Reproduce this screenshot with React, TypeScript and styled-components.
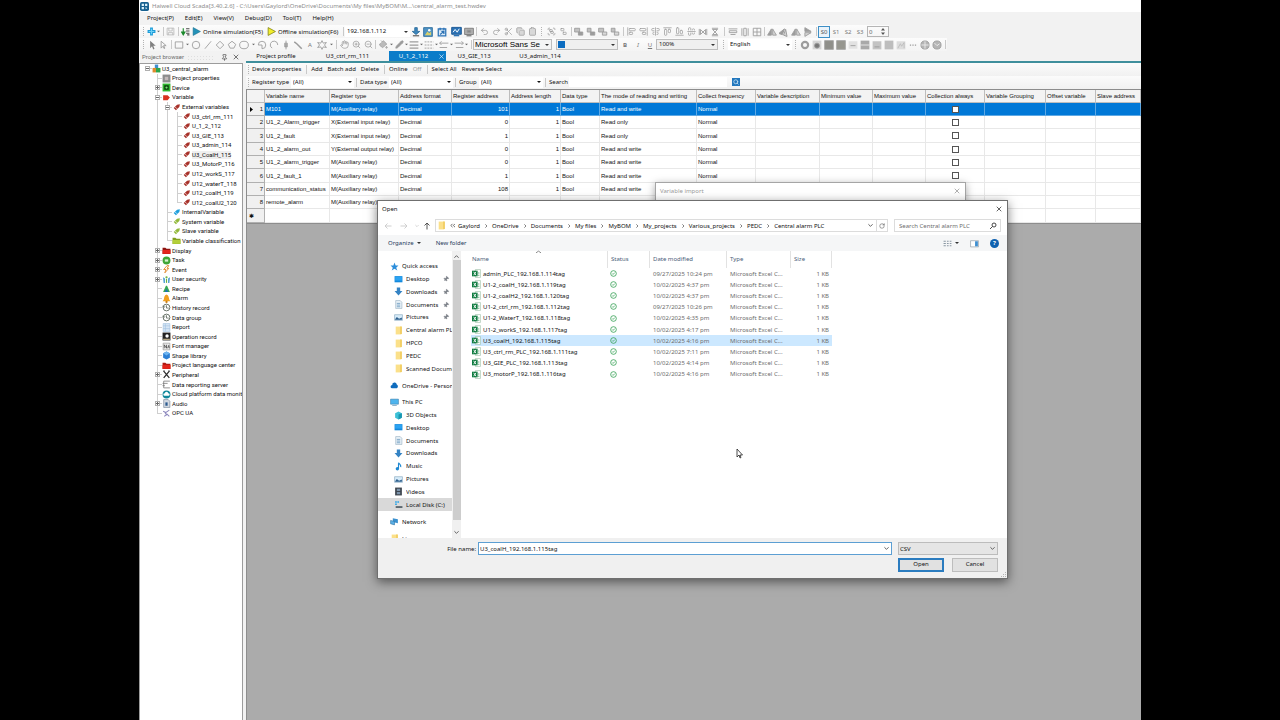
import React from 'react';
import styled, { createGlobalStyle, css } from 'styled-components';
import {
  Undo2, Redo2, Scissors, Copy, Clipboard, Group, Ungroup, Hand, ZoomIn, ZoomOut, Pin, Search, X,
  AlignStartVertical, AlignCenterVertical, AlignEndVertical, AlignStartHorizontal, AlignCenterHorizontal,
  AlignEndHorizontal, RotateCw, PaintBucket, Pencil,
} from 'lucide-react';

const ui = '"Noto Sans", "Open Sans", sans-serif';
const classic = '"Liberation Sans", Arial, sans-serif';
const tree = 'Roboto, "Noto Sans", sans-serif';

const Global = createGlobalStyle`
  * { box-sizing: border-box; }
  body { margin: 0; background: #000; font: 6px/8px ${ui}; color: #111; }
  button, input, select { font: inherit; color: inherit; margin: 0; padding: 0; border: 0; background: none; border-radius: 0; outline: 0; }
  svg { display: block; flex: none; }
  ul { list-style: none; margin: 0; padding: 0; }
`;

/* ---------- frame ---------- */
const Page = styled.div`padding: 0 139px; background: #000;`;
const Shell = styled.div`
  position: relative; min-height: 100vh; display: flex; flex-direction: column;
  background: #f2f2f2; overflow: hidden;
`;
const TitleBar = styled.header`
  height: 12px; display: flex; align-items: center; gap: 3px; padding-left: 1px;
  background: #fff; color: #8e8e8e; white-space: nowrap;
`;
const MenuBar = styled.nav`height: 13px; display: flex; align-items: center; gap: 11px; padding: 0 0 1px 8px;`;
const MenuItem = styled.button`line-height: 8px;`;

/* ---------- toolbars ---------- */
const Strip = styled.div`
  align-self: flex-start; height: 13px; display: flex; align-items: center;
  background: linear-gradient(#fcfcfc, #f4f4f4); white-space: nowrap;
`;
const Cell = styled.button<{ $w: number; $on?: boolean }>`
  width: ${p => p.$w}px; height: 12px; flex: none; display: flex; align-items: center; justify-content: center;
  gap: 2px; color: #777; ${p => p.$on && css`border: 1px solid #3d8fc6; background: #eaf3fa; color: #555;`}
`;
const RunCell = styled(Cell)`justify-content: flex-start; padding-left: 2px; color: #111;`;
const Gap = styled.span<{ $w: number }>`
  width: ${p => p.$w}px; height: 9px; flex: none; display: flex; justify-content: center;
  &::before { content: ''; width: 1px; background: #c9c9c9; }
`;
const Grip = styled.span<{ $w: number }>`
  width: ${p => p.$w}px; height: 9px; flex: none; display: flex; justify-content: center;
  &::before { content: ''; width: 1px; background: repeating-linear-gradient(#b4b4b4 0 1px, transparent 1px 2px); }
`;
const ComboBox = styled.span<{ $w: number; $boxed?: boolean; $fill?: string; $size?: number }>`
  position: relative; flex: none; width: ${p => p.$w}px; height: 11px; display: flex; align-items: center;
  background: ${p => p.$fill || 'transparent'};
  border: ${p => (p.$boxed ? '1px solid #bdbdbd' : '0')};
  select { appearance: none; width: 100%; height: 100%; padding: 0 0 0 2px; font-size: ${p => p.$size || 6}px; line-height: 9px; }
  > svg { position: absolute; right: 2px; top: 50%; margin-top: -2px; pointer-events: none; }
`;
const FontCombo = styled(ComboBox)`font-family: ${classic}; color: #000; margin-right: 4px; select { padding-left: 1px; }`;
const Swatch = styled.i`width: 7px; height: 7px; flex: none; background: #0b6cc0; margin-left: 1px;`;
const Spin = styled.span`
  width: 22px; height: 11px; margin-left: 1px; display: flex; align-items: center; justify-content: space-between; border: 1px solid #b5b5b5; color: #666; padding: 0 3px 0 1px;
  input { width: 10px; height: 9px; appearance: textfield; }
  input::-webkit-inner-spin-button { appearance: none; }
`;

const Caret = ({ c = '#333', s = 4 }: { c?: string; s?: number }) => (
  <svg width={s} height={s} viewBox="0 0 4 4"><path d="M0 1h4L2 3z" fill={c} /></svg>
);
const Combo = ({ label, w, value, boxed, fill, size, children, c }: any) => (
  <ComboBox $w={w} $boxed={boxed} $fill={fill} $size={size}>
    {children}
    <select aria-label={label}><option>{value}</option></select>
    <Caret c={c} />
  </ComboBox>
);

const G = ({ children, s = 10 }: { children: React.ReactNode; s?: number }) => (
  <svg width={s} height={s} viewBox="0 0 16 16" fill="none" stroke="#9c9c9c" strokeWidth="1.4">{children}</svg>
);
const L = (Icon: any, fill = 'none') => <Icon size={9} strokeWidth={2} color="#9c9c9c" fill={fill} />;
const FlipIcon = ({ r }: { r: number }) => (
  <G><g transform={`rotate(${r} 8 8)`}><path d="M7 3v10H1z" fill="#9c9c9c" /><path d="M9 3v10h6z" fill="#d4d4d4" /></g></G>
);

type Tool = [string, number, React.ReactNode?];
const renderTools = (tools: Tool[]) => tools.map(([name, w, icon], i) => {
  if (name === '|') return <Gap key={i} $w={w} />;
  if (name === ':') return <Grip key={i} $w={w} />;
  if (name === 'v') return <Cell key={i} $w={w} aria-label="More"><Caret s={3} c="#666" /></Cell>;
  return <Cell key={i} $w={w} aria-label={name}>{icon}</Cell>;
});

const fileTools: Tool[] = [
  [':', 8],
  ['New', 9, <G s={9}><path d="M8 1v14M1 8h14" stroke="#1b9bd8" strokeWidth="5" /><path d="M8 3v10M3 8h10" stroke="#6fd0f5" strokeWidth="2" /></G>],
  ['v', 5], ['|', 4],
  ['Save', 10, <G s={9}><path d="M2 2h12v12H2zM5 2v5h6V2M4 14v-4h8v4" stroke="#b5b5b5" /></G>],
  ['|', 6],
  ['Compile', 9, <G s={9}><path d="M4 2v11M1 9l3 5 3-5z" stroke="#1d8a2e" fill="#1d8a2e" strokeWidth="2" /><path d="M9 3h6M9 7h6M9 11h6M11 14h4" stroke="#4a4a4a" strokeWidth="2" /></G>],
];
const deployTools: Tool[] = [
  ['Download', 12, <G><path d="M6 1h4v6h4l-6 5-6-5h4z" fill="#3d87bd" stroke="#2a6b9c" /><path d="M3 14h10" stroke="#666" strokeWidth="2" /></G>],
  ['Picture', 12, <G><path d="M1 1h14v14H1z" fill="#4f93c4" stroke="#2f6f9f" /><path d="M3 13l4-6 3 3 3-3v6z" fill="#d8cf6a" stroke="none" /><circle cx="10" cy="5" r="2" fill="#fff" stroke="none" /></G>],
  ['Backup', 15, <G><path d="M2 3h12v11H2z" stroke="#2b72b5" fill="#dbeaf7" strokeWidth="2" /><path d="M5 1v4M11 1v4M5 12l6-5M7 7h4v4" stroke="#2b72b5" strokeWidth="2" /></G>],
  ['Monitor', 14, <G s={11}><path d="M1 2h14v10H1z" fill="#2b72b5" stroke="#1c5a96" /><path d="M3 9l3-4 3 4 3-5" stroke="#fff" /><path d="M4 14h8" stroke="#2b72b5" strokeWidth="2" /></G>],
  ['Screen', 11, <G><path d="M1 2h14v10H1z" fill="#b0b0b0" stroke="#777" /><path d="M5 5h6v4H5z" fill="#888" /><path d="M4 14h8" stroke="#777" strokeWidth="2" /></G>],
  ['|', 4],
  ['Undo', 12, L(Undo2)], ['Redo', 12, L(Redo2)], ['Cut', 12, L(Scissors)], ['Copy', 12, L(Copy, '#d8d8d8')], ['Paste', 12, L(Clipboard, '#d8d8d8')],
  [':', 7], ['Group', 12, L(Group)], ['Ungroup', 12, L(Ungroup)], ['|', 4],
  ...['Front', 'Back', 'Forward', 'Backward'].map((n, i): Tool => [n, 12,
    <G><path d={i % 2 ? 'M2 2h6v6H2z' : 'M1 2h8v6H1z'} fill="#c2c2c2" /><path d="M7 8h7v5H7z" fill={i < 2 ? '#9c9c9c' : '#d9d9d9'} /></G>]),
  ['|', 4],
  ['Align left', 12, L(AlignStartVertical)], ['Align right', 12, L(AlignEndVertical)], ['Align centre', 12, L(AlignCenterVertical)],
  ['Align top', 12, L(AlignStartHorizontal)], ['Align bottom', 12, L(AlignEndHorizontal)], ['Align middle', 12, L(AlignCenterHorizontal)],
  ['Space across', 12, <G><path d="M2 3v10M14 3v10M4 4l4 4 4-4v8l-4-4-4 4z" /></G>],
  ['Space down', 12, <G><path d="M3 2h10M3 14h10M4 4l4 4-4 4h8l-4-4 4-4z" /></G>],
  ['|', 6],
  ['Same width', 12, <G><path d="M1 3h14M2 6h12v3H2zM4 12h8" /></G>],
  ['Same height', 12, <G><path d="M3 2v12M6 2h4v12H6zM13 2v12" /></G>],
  ['Same size', 12, <G><path d="M2 2h12v12H2zM8 2v12M2 8h12" /></G>],
  ['|', 3],
  ['Rotate left', 12, <FlipIcon r={0} />], ['Rotate right', 12, <FlipIcon r={20} />], ['Flip across', 12, <FlipIcon r={0} />], ['Flip down', 12, <FlipIcon r={90} />],
  ['|', 4],
];

const drawTools: Tool[] = [
  [':', 8],
  ['Select', 10, <G><path d="M5 1v12l3-3 2 5 2-1-2-5h4z" fill="#808080" stroke="none" /></G>],
  ['Select node', 12, <G><path d="M5 2v11l3-3 2 4 1-1-2-4h4z" /></G>],
  ['|', 4],
  ['Rectangle', 11, <G><path d="M2 3h12v10H2z" /></G>], ['v', 6],
  ['Circle', 12, <G><circle cx="8" cy="8" r="6" /></G>],
  ['Line', 12, <G><path d="M3 14L13 2" /></G>],
  ['Diamond', 12, <G><path d="M8 2l6 6-6 6-6-6z" /></G>],
  ['Polygon', 12, <G><path d="M8 2l6 5-3 6H5L2 7z" /></G>],
  ['Ellipse', 12, <G><ellipse cx="8" cy="8" rx="7" ry="6" /></G>], ['v', 6],
  ['Pie', 12, <G><path d="M8 14V8H2a6 6 0 1 1 6 6z" /></G>],
  ['Arc', 12, <G><path d="M5 13a6 6 0 1 1 9-5" /></G>],
  ['Pen', 12, <G><path d="M8 1v4M6 5h4v6H6zM8 11v4" fill="#aaa" /></G>],
  ['Connector', 12, <G><path d="M2 3l4 3 4 4 4 4" strokeWidth="2.4" /></G>],
  ['Text', 12, 'A'],
  ['Star', 12, <G><path d="M8 1l2 4 5-1-3 4 3 4-5-1-2 4-2-4-5 1 3-4-3-4 5 1z" /></G>], ['v', 6],
  ['|', 4],
  ['Pan', 12, L(Hand)], ['Zoom in', 12, L(ZoomIn)], ['Zoom out', 12, L(ZoomOut)],
  ['|', 3],
  ['Fill', 12, L(PaintBucket, '#bbb')], ['v', 5], ['Stroke', 10, L(Pencil, '#999')], ['v', 5],
  ['Line width', 10, <G><path d="M1 3h14M1 8h14M1 13h14" strokeWidth="2" /></G>], ['v', 5],
  ['Line dash', 10, <G><path d="M1 3h14M1 8h14M1 13h14" strokeDasharray="3 1.5" /></G>], ['v', 5],
  ['Arrow start', 10, <G><path d="M1 5h14M4 2L1 5l3 3M1 12h12" /></G>], ['v', 5],
  ['Arrow end', 10, <G><path d="M1 5h14M12 2l3 3-3 3M3 12h12" /></G>], ['v', 5],
  ['|', 4],
];
const widgetTools: Tool[] = [
  [':', 7],
  ['Lamp', 12, <G><circle cx="8" cy="8" r="5" strokeWidth="3.5" /></G>],
  ['Switch', 12, <G><path d="M1 1h14v14H1z" fill="#d5d5d5" stroke="none" /><circle cx="8" cy="9" r="4" fill="#777" /></G>],
  ...['#8f8f8a', '#96968f'].map((c, i): Tool => ['Block ' + i, 12, <G><path d="M1 1h14v14H1z" fill={c} stroke="#a5a5a5" /></G>]),
  ['Gauge', 12, <G><path d="M1 2h14v12H1z" fill="#e2e2e2" stroke="none" /><path d="M4 9h8" /></G>],
  ['Bars', 12, <G><path d="M1 1h14v14H1z" fill="#a9a9a9" stroke="none" /><path d="M1 8h14" stroke="#eee" /></G>],
  ['Trend', 12, <G><path d="M1 2h14v13H1z" fill="#c3c3c3" stroke="none" /><path d="M4 11h8" stroke="#999" /></G>],
  ['Table', 12, <G><path d="M1 1h14v14H1z" fill="#bdbdbd" stroke="none" /></G>],
  ['Chart', 12, <G><path d="M1 2h14v13H1z" fill="#ddd" stroke="none" /><path d="M3 13l4-7 2 4 4-6v9" stroke="#bbb" /></G>],
  ['More widgets', 12, <G><path d="M3 8h2M7 8h2M11 8h2" strokeWidth="2" /></G>],
  ['Web', 12, <G><circle cx="8" cy="8" r="6.5" fill="#b5b5b5" /><path d="M2 8h12M8 2v12" stroke="#eee" /></G>],
  ['Clock', 12, <G><circle cx="8" cy="8" r="6.5" fill="#b5b5b5" /><path d="M4 5l4 4 4-3" stroke="#eee" /></G>],
];

/* ---------- workspace ---------- */
const Body = styled.div`flex: 1; display: flex; gap: 3px; min-height: 0;`;
const Side = styled.aside`width: 104px; flex: none; display: flex; flex-direction: column;`;
const SideHead = styled.div`
  height: 12px; display: flex; align-items: center; padding: 0 3px; color: #6d6d6d; font-family: ${tree};
  i { flex: 1; height: 5px; margin: 0 8px 0 3px; background: radial-gradient(#dedede 1px, transparent 1px) 0 0 / 3px 3px; }
  svg { margin-right: 4px; } svg:last-child { margin-right: 0; }
`;
const SideBody = styled.div`flex: 1; background: #fff; border: 1px solid #9c9c9c; border-bottom: 0; overflow: hidden; padding-left: 2px;`;
const Tree = styled.ul`height: 354px; display: grid; grid-auto-rows: 1fr; font-family: ${tree};`;
const TreeRow = styled.li`display: flex; align-items: center; white-space: nowrap; min-height: 0;`;
const Slot = styled.span<{ $v?: boolean; $h?: boolean; $last?: boolean }>`
  width: 10px; align-self: stretch; flex: none; display: flex; align-items: center; justify-content: center;
  background:
    linear-gradient(#cfcfcf, #cfcfcf) 5px 0 / ${p => (p.$v ? 1 : 0)}px ${p => (p.$last ? '50%' : '100%')} no-repeat,
    linear-gradient(#cfcfcf, #cfcfcf) 100% 50% / ${p => (p.$h ? 5 : 0)}px 1px no-repeat;
`;
const TreeIcon = styled.span`width: 9px; flex: none; margin-right: 1px; display: flex; justify-content: center;`;
const TreeText = styled.span<{ $hot?: boolean }>`background: ${p => (p.$hot ? '#efefef' : 'none')};`;
const ExpandBox = styled.button`
  && { width: 5px; height: 5px; border: 1px solid #b0b0b0; background: #fff; display: flex; align-items: center; justify-content: center; }
`;
const Expand = ({ open }: { open?: boolean }) => (
  <ExpandBox aria-label={open ? 'Collapse' : 'Expand'}>
    <svg width="3" height="3" viewBox="0 0 3 3"><path d={open ? 'M0 1.5h3' : 'M0 1.5h3M1.5 0v3'} stroke="#666" strokeWidth="1" /></svg>
  </ExpandBox>
);
const I = ({ children, s = 9 }: { children: React.ReactNode; s?: number }) => <svg width={s} height={s} viewBox="0 0 16 16" fill="none">{children}</svg>;
const Tag = ({ c }: { c: string }) => <I><path d="M3 9l6-6 5-1-1 5-6 6z" fill={c} /><path d="M5 7l5 4" stroke="#fff" strokeWidth="1" /></I>;
const folder = (c: string, d: string) => <I><path d="M1 3h5l2 2h7v9H1z" fill={d} /><path d="M1 7h14v7H1z" fill={c} /></I>;
const historyIcon = <I><circle cx="8" cy="8" r="6" stroke="#5b665b" strokeWidth="1.6" /><path d="M8 4v5h4M1 5l2 3 3-2" stroke="#5b665b" strokeWidth="1.4" /></I>;

type Node = [number, string, React.ReactNode, string?];
const nodes: Node[] = [
  [0, 'U3_central_alarm', <I><path d="M5 1h6v7H5z" fill="#3e8fd0" /><path d="M1 7h6v8H1z" fill="#e08a2c" /><path d="M7 7h8v8H7z" fill="#2ea44a" /></I>, '-'],
  [1, 'Project properties', <I><path d="M1 1h14v14H1z" fill="#8d8d8d" /><path d="M5 5h6v6H5z" fill="#c2b9b9" /></I>],
  [1, 'Device', <I><path d="M1 1h14v14H1z" fill="#2fb52f" /><path d="M4 4h8v8H4z" fill="#0c3e0c" /><circle cx="8" cy="8" r="2" fill="#74e374" /></I>, '+'],
  [1, 'Variable', <I><path d="M2 4h8l4 4-4 5H2z" fill="#d9301f" /></I>, '-'],
  [2, 'External variables', <Tag c="#a8322a" />, '-'],
  ...['U3_ctrl_rm_111', 'U_1_2_112', 'U3_GIE_113', 'U3_admin_114', 'U3_CoalH_115', 'U3_MotorP_116', 'U12_workS_117', 'U12_waterT_118', 'U12_coalH_119', 'U12_coalU2_120']
    .map((t): Node => [3, t, <Tag c="#a8322a" />]),
  [2, 'InternalVariable', <Tag c="#1f9fdc" />],
  [2, 'System variable', <Tag c="#93b93c" />],
  [2, 'Slave variable', <Tag c="#93b93c" />],
  [2, 'Variable classification', folder('#b4cf3a', '#7f9e1c')],
  [1, 'Display', folder('#e3241b', '#8e1410'), '+'],
  [1, 'Task', <I><circle cx="8" cy="8" r="7" fill="#3fa535" /><path d="M5 6h6v4H5z" fill="#d6f2d0" /></I>, '+'],
  [1, 'Event', <I><path d="M9 1L3 8h4l-2 6 7-8H9l3-5z" stroke="#e0882a" strokeWidth="1.6" /></I>, '+'],
  [1, 'User security', <I><path d="M2 4l3 2v8H3zM14 4l-3 2v8h2z" fill="#2f8fca" /><path d="M7 7h2v7H7z" fill="#6db33f" /><circle cx="8" cy="4" r="2" fill="#6db33f" /></I>, '+'],
  [1, 'Recipe', <I><path d="M7 3h2l5 11H2z" fill="#35a853" /><path d="M8 8l3 6H5z" fill="#1d6fb8" /></I>],
  [1, 'Alarm', <I><path d="M8 1c4 1 4 5 5 9l2 3H1l2-3c1-4 1-8 5-9z" fill="#f0a020" /><circle cx="8" cy="14" r="2" fill="#c97d10" /></I>],
  [1, 'History record', historyIcon],
  [1, 'Data group', historyIcon],
  [1, 'Report', <I><path d="M2 1h12v14H2z" fill="#d6e6f5" stroke="#9dbfdf" /><path d="M2 5h12M6 1v14M2 10h12" stroke="#9dbfdf" /></I>],
  [1, 'Operation record', <I><path d="M1 1h14v14H1z" fill="#222" /><circle cx="9" cy="7" r="3" fill="#fff" /><path d="M2 12h12v2H2z" fill="#c9b78f" /></I>],
  [1, 'Font manager', <I><path d="M2 2h12v12H2z" fill="#e8e8e8" stroke="#8a8a8a" /><path d="M4 11V5l4 6V5M10 11l2-5 1 5" stroke="#333" strokeWidth="1.2" /></I>],
  [1, 'Shape library', <I><path d="M8 1l6 3v8l-6 3-6-3V4z" fill="#2c7fd4" /><path d="M8 1l6 3-6 4-6-4z" fill="#6db4f0" /></I>],
  [1, 'Project language center', folder('#e3241b', '#b01a12')],
  [1, 'Peripheral', <I><path d="M3 2l10 12M13 2L3 14" stroke="#2c2c2c" strokeWidth="2.2" /><path d="M2 2h3M11 2h3" stroke="#555" strokeWidth="2" /></I>, '+'],
  [1, 'Data reporting server', <I><path d="M3 2h11M3 2v12h11M1 6h9M1 10h4" stroke="#777" strokeWidth="1.4" /></I>],
  [1, 'Cloud platform data monitor', <I><circle cx="8" cy="8" r="7" fill="#12889b" /><path d="M4 10a2 2 0 0 1 1-4 3 3 0 0 1 6 0 2 2 0 0 1 1 4z" fill="#fff" /></I>],
  [1, 'Audio', <I><path d="M3 1h8l3 3v11H3z" fill="#d4dae2" stroke="#66788c" /><path d="M6 6h4v6H6z" fill="#2c5b8f" /></I>, '+'],
  [1, 'OPC UA', <I><path d="M2 4l5 2 6-4M4 13l5-4 4 4M5 6l4 5" stroke="#8b86bd" strokeWidth="1.8" /></I>],
];
const lastOf: Record<number, string> = { 1: 'OPC UA', 2: 'Variable classification', 3: 'U12_coalU2_120' };

const Main = styled.main`flex: 1; min-width: 0; display: flex; flex-direction: column;`;
const Tabs = styled.div`height: 12px; display: flex; align-items: stretch; border-bottom: 2px solid #3f8f9c;`;
const Tab = styled.button<{ $w: number; $on?: boolean }>`
  width: ${p => p.$w}px; display: flex; align-items: center; justify-content: center; gap: 10px;
  ${p => p.$on && css`background: #0a7cc9; color: #fff; padding-left: 9px;`}
`;
const Bar = styled.div`
  height: 13px; display: flex; align-items: center; padding-bottom: 1px; background: linear-gradient(#fbfbfb, #f1f1f1); white-space: nowrap;
`;
const TextButton = styled.button<{ $off?: boolean }>`padding: 0 3px 0 2px; ${p => p.$off && 'color: #a0a0a0;'}`;
const FieldLabel = styled.label<{ $w: number }>`width: ${p => p.$w}px; flex: none; padding-left: 2px;`;
const SearchInput = styled.input`width: 158px; height: 10px; background: #fff;`;
const SearchGo = styled.button`&& { width: 8px; height: 8px; margin-left: 5px; background: #2277bd; display: grid; place-items: center; }`;

const Canvas = styled.div`flex: 1; background: #ababab; border-left: 1px solid #8d8d8d; border-top: 1px solid #8d8d8d; overflow: hidden;`;
const Grid = styled.table`
  width: 100%; table-layout: fixed; border-collapse: separate; border-spacing: 0; background: #fff; font-family: ${classic};
  border-bottom: 1px solid #8d8d8d;
  th, td { padding: 0 1px; border-right: 1px solid #e8e8e8; border-bottom: 1px solid #e8e8e8; font-weight: 400; text-align: left; white-space: nowrap; overflow: hidden; }
  tbody tr { height: 13px; }
  tbody tr:nth-child(3n) { height: 14px; }
  thead th { height: 13px; background: #f3f3f3; border-color: #bdbdbd; }
  tbody th { background: #f0f0f0; text-align: right; border-color: #b0b0b0; }
`;
const GridRow = styled.tr<{ $on?: boolean }>`
  ${p => p.$on && css`td { background: #0078d7; color: #fff; border-color: #5fa9e4; }`}
`;
const Num = styled.td`&& { text-align: right; }`;
const Mid = styled.td`&& { text-align: center; }`;
const Mark = styled.span`float: left; width: 6px; height: 8px; display: grid; place-items: center;`;
const Tick = styled.input`
  && { appearance: none; width: 7px; height: 7px; border: 1px solid #555; background: #fff; display: block; margin: 0 auto; }
`;

const cols: [string, number | undefined][] = [
  ['', 18], ['Variable name', 65], ['Register type', 69], ['Address format', 53], ['Register address', 58], ['Address length', 51],
  ['Data type', 39], ['The mode of reading and writing', 97], ['Collect frequency', 59], ['Variable description', 64],
  ['Minimum value', 53], ['Maximum value', 53], ['Collection always', 59], ['Variable Grouping', 61], ['Offset variable', 50], ['Slave address', undefined],
];
const variables = [
  ['M101', 'M(Auxiliary relay)', '101', 'Read and write'],
  ['U1_2_Alarm_trigger', 'X(External input relay)', '0', 'Read only'],
  ['U1_2_fault', 'X(External input relay)', '1', 'Read only'],
  ['U1_2_alarm_out', 'Y(External output relay)', '0', 'Read and write'],
  ['U1_2_alarm_trigger', 'M(Auxiliary relay)', '0', 'Read and write'],
  ['U1_2_fault_1', 'M(Auxiliary relay)', '1', 'Read and write'],
  ['communication_status', 'M(Auxiliary relay)', '108', 'Read and write'],
  ['remote_alarm', 'M(Auxiliary relay)', '200', 'Read and write'],
];

/* ---------- windows ---------- */
const ImportWindow = styled.section`
  position: absolute; left: 516px; top: 182px; width: 311px; height: 60px; background: #fff; border: 1px solid #a5a5a5;
  box-shadow: 0 2px 8px rgba(0, 0, 0, .35); color: #9a9a9a;
`;
const ImportHead = styled.div`height: 16px; display: flex; align-items: center; justify-content: space-between; padding: 0 4px;`;
const Dialog = styled.section`
  position: absolute; left: 238px; top: 200px; width: 631px; background: #fff; border: 1px solid #6f6f6f;
  box-shadow: 0 3px 10px rgba(0, 0, 0, .5); display: flex; flex-direction: column; white-space: nowrap;
`;
const DialogHead = styled.div`height: 16px; display: flex; align-items: center; justify-content: space-between; padding: 0 4px;`;
const NavRow = styled.div`height: 18px; display: flex; align-items: center; padding: 0 6px 1px 4px;`;
const NavButton = styled.button<{ $w: number }>`width: ${p => p.$w}px; display: grid; place-items: center;`;
const Address = styled.div`flex: 1; height: 13px; display: flex; align-items: center; border: 1px solid #dcdcdc; padding-left: 1px;`;
const Crumbs = styled.ol`flex: 1; margin: 0; padding: 0; list-style: none; display: flex; align-items: center;`;
const Crumb = styled.li`display: flex; align-items: center; svg { margin: 0 4px; } &:first-child svg { margin-right: 3px; }`;
const CrumbLink = styled.a`color: #111; text-decoration: none;`;
const AddressButton = styled.button<{ $line?: boolean }>`
  && { width: 11px; height: 11px; display: grid; place-items: center; ${p => p.$line && 'border-left: 1px solid #dcdcdc;'} }
`;
const SearchBox = styled.label`
  width: 107px; height: 13px; margin-left: 6px; display: flex; align-items: center; border: 1px solid #dcdcdc; padding: 0 3px 0 4px;
  input { flex: 1; min-width: 0; height: 9px; } input::placeholder { color: #6d6d6d; opacity: 1; }
`;
const CommandRow = styled.div`
  height: 16px; display: flex; align-items: center; background: #f5f6f7; color: #1e395b; padding: 0 8px 0 10px;
  button { display: flex; align-items: center; gap: 3px; }
`;
const NewFolder = styled.button`margin-left: 15px;`;
const Spacer = styled.span`flex: 1;`;
const ViewTools = styled.div`display: flex; align-items: center; gap: 11px;`;
const HelpButton = styled.button`
  && { width: 9px; height: 9px; border-radius: 5px; background: #0f62b0; color: #fff; justify-content: center; font-weight: 700; }
`;
const Panes = styled.div`height: 287px; display: flex;`;
const Places = styled.nav`width: 74px; flex: none; overflow: hidden; padding-top: 9px; display: flex; flex-direction: column; gap: 4px;`;
const PlaceGroup = styled.ul<{ $h: number }>`
  height: ${p => p.$h}px; flex: none; display: grid; grid-auto-rows: 1fr; grid-template-columns: minmax(0, 1fr);
`;
const Place = styled.li<{ $child?: boolean; $on?: boolean }>`
  display: flex; align-items: center; min-height: 0; padding-left: ${p => (p.$child ? 16 : 12)}px; background: ${p => (p.$on ? '#d9d9d9' : 'none')};
  > svg { margin-right: 3px; } > span { flex: 1; min-width: 0; overflow: hidden; }
`;
const Scroll = styled.div`
  width: 9px; flex: none; display: flex; flex-direction: column; align-items: center; justify-content: space-between; background: #f0f0f0; padding: 3px 0;
  i { width: 8px; height: 260px; background: #cdcdcd; margin-bottom: 9px; }
`;
const Files = styled.table`
  width: 361px; margin: 0 0 auto 10px; table-layout: fixed; border-collapse: separate; border-spacing: 0; color: #6d6d6d;
  th { height: 17px; font-weight: 400; text-align: left; padding: 0 0 2px 3px; border-right: 1px solid #e2e2e2; color: #4c607a; vertical-align: middle; }
  th:first-child { padding-left: 1px; }
  td { height: 11px; padding: 0 0 0 3px; overflow: hidden; }
  tr:nth-child(5n) td { height: 12px; }
`;
const SortHead = styled.span`position: relative; display: block; svg { position: absolute; left: 64px; top: -5px; }`;
const FileRow = styled.tr<{ $on?: boolean }>`
  td { background: ${p => (p.$on ? '#cce8ff' : 'none')}; }
  td:first-child { padding-left: 1px; color: #111; }
  td:nth-child(2) { padding-left: 2px; }
  td:last-child { text-align: right; padding-right: 3px; }
`;
const NameCell = styled.span`display: flex; align-items: center; gap: 2px;`;
const Foot = styled.div`
  height: 40px; background: #f0f0f0; display: grid; grid-template-columns: 96px 1fr 100px; grid-template-rows: 13px 13px;
  row-gap: 3px; align-content: start; align-items: center; padding: 4px 9px 0 4px; position: relative;
`;
const NameLabel = styled.label`text-align: right; padding-right: 2px;`;
const NameBox = styled.div`
  height: 13px; margin-right: 6px; display: flex; align-items: center; background: #fff; border: 1px solid #5c9fd3; padding: 0 2px 0 1px;
  input { flex: 1; min-width: 0; height: 9px; }
`;
const TypeBox = styled.div`
  position: relative; height: 13px; display: flex; align-items: center; background: #e5e5e5; border: 1px solid #bcbcbc;
  select { appearance: none; width: 100%; height: 11px; padding-left: 1px; }
  svg { position: absolute; right: 2px; top: 3px; pointer-events: none; }
`;
const Actions = styled.div`grid-column: 3; display: flex; justify-content: space-between;`;
const Action = styled.button<{ $main?: boolean }>`
  && { width: 46px; height: 14px; background: #e1e1e1; border: ${p => (p.$main ? '2px solid #2b7cbf' : '1px solid #bdbdbd')}; line-height: 9px; }
`;
const Resize = styled.span`position: absolute; right: 1px; bottom: 1px;`;
const Pointer = styled.svg`position: absolute; left: 597px; top: 448px;`;

const chev = (d: string, c = '#555', s = 5) => <svg width={s} height={s} viewBox="0 0 6 6" fill="none" stroke={c} strokeWidth="1.1"><path d={d} /></svg>;
const down = 'M0.5 1.5L3 4L5.5 1.5';
const arrow = (r: number, c: string) => <svg width="8" height="8" viewBox="0 0 16 16" fill="none" stroke={c} strokeWidth="1.8"><g transform={`rotate(${r} 8 8)`}><path d="M2 8h13M7 3L2 8l5 5" /></g></svg>;

const yellow = <I s={9}><path d="M3 1h10v14H3z" fill="#fbe08a" /><path d="M11 1h3v13h-3z" fill="#f0cc5e" /></I>;
const desk = <I s={9}><path d="M1 2h14v11H1z" fill="#1489dc" /><path d="M2 3h12v7H2z" fill="#2ba3f2" /></I>;
const dl = <I s={9}><path d="M5 1h6v6h4l-7 8-7-8h4z" fill="#3583c4" /></I>;
const docs = <I s={9}><path d="M3 1h8l3 3v11H3z" fill="#eaf2f8" stroke="#8ea9bd" /><path d="M5 6h6M5 9h6M5 12h6" stroke="#5a8fb8" strokeWidth="1.3" /></I>;
const pics = <I s={9}><path d="M1 3h14v10H1z" fill="#d7ecfa" stroke="#7c9fb8" /><path d="M2 11l3-4 4 3 5-2v4H2z" fill="#2c5f8d" /></I>;
type PlaceItem = [string, React.ReactNode, boolean?];
const quick: PlaceItem[] = [
  ['Quick access', <I s={9}><path d="M8 1l2 5 5 0-4 4 2 5-5-3-5 3 2-5-4-4h5z" fill="#2b8ddb" /></I>],
  ['Desktop', desk, true], ['Downloads', dl, true], ['Documents', docs, true], ['Pictures', pics, true],
  ['Central alarm PLC', yellow], ['HPCO', yellow], ['PEDC', yellow], ['Scanned Documents', yellow],
];
const pc: PlaceItem[] = [
  ['This PC', <I s={9}><path d="M1 2h14v9H1z" fill="#4db4ee" stroke="#3a7ca8" /><path d="M4 13h8v1H4z" fill="#3a7ca8" /></I>],
  ['3D Objects', <I s={9}><path d="M8 1l6 3v8l-6 3-6-3V4z" fill="#3cc0d6" /><path d="M8 6l6-2v8l-6 3z" fill="#1a96b0" /></I>],
  ['Desktop', desk], ['Documents', docs], ['Downloads', dl],
  ['Music', <I s={9}><path d="M8 2v10" stroke="#1e88d2" strokeWidth="2" /><circle cx="6" cy="12" r="3" fill="#1e88d2" /><path d="M8 1c1 3 5 3 4 8" stroke="#1e88d2" strokeWidth="2" /></I>],
  ['Pictures', pics],
  ['Videos', <I s={9}><path d="M2 1h12v14H2z" fill="#3d444d" /><path d="M5 3h6v4H5zM5 9h6v4H5z" fill="#7c93ab" /></I>],
  ['Local Disk (C:)', <I s={9}><path d="M2 2h3v3H2zM6 2h3v3H6zM2 6h3v3H2z" fill="#2aa5e8" /><path d="M3 11h12v3H3z" fill="#4d5a63" /></I>],
];
const PlaceList = ({ items, h }: { items: PlaceItem[]; h: number }) => (
  <PlaceGroup $h={h}>
    {items.map(([t, icon, pinned], i) => (
      <Place key={t} $child={i > 0} $on={t.startsWith('Local')}>
        {icon}<span>{t}</span>{pinned && <Pin size={6} color="#7a8088" fill="#7a8088" transform="rotate(45)" />}
      </Place>
    ))}
  </PlaceGroup>
);

const files = [
  ['admin_PLC_192.168.1.114tag', '09/27/2025 10:24 pm'], ['U1-2_coalH_192.168.1.119tag', '10/02/2025 4:37 pm'],
  ['U1-2_coalH2_192.168.1.120tag', '10/02/2025 4:37 pm'], ['U1-2_ctrl_rm_192.168.1.112tag', '09/27/2025 10:26 pm'],
  ['U1-2_WaterT_192.168.1.118tag', '10/02/2025 4:35 pm'], ['U1-2_workS_192.168.1.117tag', '10/02/2025 4:17 pm'],
  ['U3_coalH_192.168.1.115tag', '10/02/2025 4:16 pm'], ['U3_ctrl_rm_PLC_192.168.1.111tag', '10/02/2025 7:11 pm'],
  ['U3_GIE_PLC_192.168.1.113tag', '10/02/2025 4:14 pm'], ['U3_motorP_192.168.1.116tag', '10/02/2025 4:16 pm'],
];
const excel = <I s={9}><path d="M6 1h9v14H6z" fill="#fff" stroke="#8fb59c" /><path d="M12 6v2M12 10v2" stroke="#4ea36d" strokeWidth="2" /><path d="M0 3h10v10H0z" fill="#107c41" /><path d="M3 5l4 6M7 5l-4 6" stroke="#fff" strokeWidth="1.6" /></I>;
const synced = <I s={7}><circle cx="8" cy="8" r="6.5" stroke="#2f9e4f" strokeWidth="1.8" /><path d="M5 8l2 2 4-4" stroke="#2f9e4f" strokeWidth="1.8" /></I>;
const crumbs = ['Gaylord', 'OneDrive', 'Documents', 'My files', 'MyBOM', 'My_projects', 'Various_projects', 'PEDC', 'Central alarm PLC'];

const OpenDialog = () => (
  <Dialog role="dialog" aria-label="Open">
    <DialogHead><span>Open</span><button aria-label="Close"><X size={8} color="#111" strokeWidth={2} /></button></DialogHead>
    <NavRow>
      <NavButton $w={12} aria-label="Back">{arrow(0, '#c9c9c9')}</NavButton>
      <NavButton $w={20} aria-label="Forward">{arrow(180, '#c9c9c9')}</NavButton>
      <NavButton $w={5} aria-label="Recent">{chev(down, '#c9c9c9', 4)}</NavButton>
      <NavButton $w={16} aria-label="Up">{arrow(90, '#444')}</NavButton>
      <Address>
        {yellow}
        <Crumbs>
          <Crumb><svg width="5" height="5" viewBox="0 0 6 6" fill="none" stroke="#555"><path d="M3 1L1 3l2 2M6 1L4 3l2 2" /></svg></Crumb>
          {crumbs.map((c, i) => (
            <Crumb key={c}>{i > 0 && chev('M2 0.5L4.5 3L2 5.5', '#555', 4)}<CrumbLink href="#">{c}</CrumbLink></Crumb>
          ))}
        </Crumbs>
        <AddressButton aria-label="Previous locations">{chev(down)}</AddressButton>
        <AddressButton $line aria-label="Refresh"><RotateCw size={6} color="#444" strokeWidth={2} /></AddressButton>
      </Address>
      <SearchBox>
        <input aria-label="Search Central alarm PLC" placeholder="Search Central alarm PLC" />
        <svg width="8" height="8" viewBox="0 0 16 16" fill="none" stroke="#333" strokeWidth="1.8"><circle cx="10" cy="6" r="4" /><path d="M7 9l-5 5" /></svg>
      </SearchBox>
    </NavRow>
    <CommandRow>
      <button>Organize <Caret /></button>
      <NewFolder>New folder</NewFolder>
      <Spacer />
      <ViewTools>
        <button aria-label="Change your view"><I s={9}><path d="M1 3h4v2H1zM1 7h4v2H1zM1 11h4v2H1zM7 3h3v2H7zM7 7h3v2H7zM7 11h3v2H7zM12 3h3v2h-3zM12 7h3v2h-3zM12 11h3v2h-3z" fill="#8a97a3" /></I><Caret /></button>
        <button aria-label="Preview pane"><I s={9}><path d="M1 3h14v11H1z" fill="#fff" stroke="#7d8a96" /><path d="M9 4h5v9H9z" fill="#3f8fd0" /></I></button>
        <HelpButton aria-label="Help">?</HelpButton>
      </ViewTools>
    </CommandRow>
    <Panes>
      <Places aria-label="Places">
        <PlaceList items={quick} h={115} />
        <PlaceList items={[['OneDrive - Personal', <I s={9}><path d="M4 13a3 3 0 0 1 0-6 4 4 0 0 1 8-1 4 4 0 0 1 0 7z" fill="#0f6cbd" /></I>]]} h={13} />
        <PlaceList items={pc} h={115} />
        <PlaceList items={[['Network', <I s={9}><path d="M5 2l9 2v7l-9-2z" fill="#3a90cf" /><path d="M1 6l7 2v6l-7-2z" fill="#5bb0e6" stroke="#2a6f9f" /></I>]]} h={13} />
        <PlaceList items={[['Linux', yellow]]} h={13} />
      </Places>
      <Scroll>{chev('M0.5 4.5L3 2L5.5 4.5')}<i />{chev(down)}</Scroll>
      <Files>
        <colgroup><col width="137" /><col width="42" /><col width="77" /><col width="64" /><col width="41" /></colgroup>
        <thead><tr>
          <th><SortHead>Name<svg width="5" height="4" viewBox="0 0 6 4" fill="none" stroke="#777"><path d="M0 3l3-2 3 2" /></svg></SortHead></th>
          <th>Status</th><th>Date modified</th><th>Type</th><th>Size</th>
        </tr></thead>
        <tbody>
          {files.map(([n, d], i) => (
            <FileRow key={n} $on={i === 6}>
              <td><NameCell>{excel}{n}</NameCell></td><td>{synced}</td><td>{d}</td><td>Microsoft Excel C...</td><td>1 KB</td>
            </FileRow>
          ))}
        </tbody>
      </Files>
    </Panes>
    <Foot>
      <NameLabel htmlFor="file-name">File name:</NameLabel>
      <NameBox><input id="file-name" defaultValue="U3_coalH_192.168.1.115tag" />{chev(down)}</NameBox>
      <TypeBox><select aria-label="File type"><option>CSV</option></select>{chev(down)}</TypeBox>
      <Actions><Action $main>Open</Action><Action>Cancel</Action></Actions>
      <Resize><svg width="5" height="5" viewBox="0 0 5 5" fill="#b5b5b5"><path d="M4 0h1v1H4zM2 2h1v1H2zM4 2h1v1H4zM0 4h1v1H0zM2 4h1v1H2zM4 4h1v1H4z" /></svg></Resize>
    </Foot>
  </Dialog>
);

export default function App() {
  return (
    <Page>
      <Global />
      <Shell>
        <TitleBar>
          <svg width="9" height="9" viewBox="0 0 16 16"><rect width="16" height="16" rx="3" fill="#17608f" /><path d="M3 3h4v4H3zM9 3h4v4H9zM3 9h4v4H3zM10 9l3 2-3 2z" fill="#d9f0fa" /></svg>
          {'Haiwell Cloud Scada[3.40.2.6] - C:\\Users\\Gaylord\\OneDrive\\Documents\\My files\\MyBOM\\M...\\central_alarm_test.hwdev'}
        </TitleBar>
        <MenuBar>
          {['Project(P)', 'Edit(E)', 'View(V)', 'Debug(D)', 'Tool(T)', 'Help(H)'].map(m => <MenuItem key={m}>{m}</MenuItem>)}
        </MenuBar>
        <Strip>
          {renderTools(fileTools)}
          <RunCell $w={75}><svg width="9" height="9" viewBox="0 0 16 16"><path d="M2 1l13 7-13 7z" fill="#2492b8" stroke="#1a6f8f" /></svg>Online simulation(F5)</RunCell>
          <RunCell $w={76}><svg width="9" height="9" viewBox="0 0 16 16"><path d="M2 1l13 7-13 7z" fill="#f2ee2c" stroke="#8a8a1e" strokeWidth="1.5" /></svg>Offline simulation(F6)</RunCell>
          <Gap $w={4} />
          <Combo label="Device address" w={65} value="192.168.1.112" fill="#fff" />
          {renderTools(deployTools)}
          <Cell $w={12} $on>S0</Cell><Cell $w={12}>S1</Cell><Cell $w={12}>S2</Cell><Cell $w={12}>S3</Cell>
          <Spin><input type="number" aria-label="State" defaultValue={0} /><svg width="4" height="7" viewBox="0 0 4 7"><path d="M0 2.5L2 0l2 2.5zM0 4.5L2 7l2-2.5z" fill="#555" /></svg></Spin>
        </Strip>
        <Strip>
          {renderTools(drawTools)}
          <FontCombo $w={79} $boxed $fill="#f4f4f4" $size={8}><select aria-label="Font"><option>Microsoft Sans Se</option></select><Caret /></FontCombo>
          <Combo label="Colour" w={62} value="" boxed fill="#efefef"><Swatch /></Combo>
          <Cell $w={14}><b>B</b></Cell><Cell $w={12}><i>I</i></Cell><Cell $w={12}><u>U</u></Cell>
          <Combo label="Zoom" w={62} value="100%" boxed fill="#efefef" />
          <Grip $w={10} />
          <Combo label="Language" w={64} value="English" fill="#fff" />
          {renderTools(widgetTools)}
          <Gap $w={4} />
        </Strip>
        <Body>
          <Side>
            <SideHead>Project browser<i /><Pin size={7} color="#333" /><X size={8} color="#333" /></SideHead>
            <SideBody>
              <Tree>
                {nodes.map(([lv, text, icon, box], i) => {
                  const pos = (level: number) => nodes.findIndex(n => n[1] === lastOf[level]);
                  return (
                    <TreeRow key={text}>
                      {Array.from({ length: lv + 1 }, (_, s) => (
                        s === lv
                          ? <Slot key={s} $v={lv > 0} $h $last={text === lastOf[lv]}>{box && <Expand open={box === '-'} />}</Slot>
                          : <Slot key={s} $v={s > 0 && i < pos(s)} />
                      ))}
                      <TreeIcon>{icon}</TreeIcon><TreeText $hot={text === 'U3_CoalH_115'}>{text}</TreeText>
                    </TreeRow>
                  );
                })}
              </Tree>
            </SideBody>
          </Side>
          <Main>
            <Tabs>
              <Tab $w={60}>Project profile</Tab><Tab $w={83}>U3_ctrl_rm_111</Tab>
              <Tab $w={57} $on>U_1_2_112<X size={7} strokeWidth={2} /></Tab>
              <Tab $w={56}>U3_GIE_113</Tab><Tab $w={76}>U3_admin_114</Tab>
            </Tabs>
            <Bar>
              <Grip $w={4} /><TextButton>Device properties</TextButton><Gap $w={5} />
              <TextButton>Add</TextButton><TextButton>Batch add</TextButton><TextButton>Delete</TextButton><Gap $w={5} />
              <TextButton>Online</TextButton><TextButton $off>Off</TextButton><Gap $w={5} />
              <TextButton>Select All</TextButton><TextButton>Reverse Select</TextButton>
            </Bar>
            <Bar>
              <Grip $w={4} />
              <FieldLabel $w={41}>Register type</FieldLabel><Combo label="Register type" w={63} value="(All)" fill="#fff" c="#111" /><Gap $w={4} />
              <FieldLabel $w={31}>Data type</FieldLabel><Combo label="Data type" w={64} value="(All)" fill="#fff" c="#111" /><Gap $w={4} />
              <FieldLabel $w={22}>Group</FieldLabel><Combo label="Group" w={64} value="(All)" fill="#fff" c="#111" /><Gap $w={4} />
              <FieldLabel $w={22} htmlFor="search">Search</FieldLabel><SearchInput id="search" />
              <SearchGo aria-label="Run search"><Search size={6} color="#cfe6f7" strokeWidth={3} /></SearchGo>
            </Bar>
            <Canvas>
              <Grid>
                <colgroup>{cols.map(([n, w]) => <col key={n} width={w} />)}</colgroup>
                <thead><tr>{cols.map(([n]) => <th key={n} scope="col">{n}</th>)}</tr></thead>
                <tbody>
                  {variables.map(([n, t, a, m], i) => (
                    <GridRow key={n} $on={i === 0}>
                      <th scope="row">{i === 0 && <Mark><svg width="3" height="5" viewBox="0 0 3 5"><path d="M0 0l3 2.5L0 5z" fill="#000" /></svg></Mark>}{i + 1}</th>
                      <td>{n}</td><td>{t}</td><td>Decimal</td><Num>{a}</Num><Num>1</Num><td>Bool</td><td>{m}</td><td>Normal</td>
                      <td /><td /><td /><Mid><Tick type="checkbox" aria-label={`Collection always, ${n}`} /></Mid><td /><td /><td />
                    </GridRow>
                  ))}
                  <GridRow><th><Mark>✱</Mark></th>{cols.slice(1).map(([n]) => <td key={n} />)}</GridRow>
                </tbody>
              </Grid>
            </Canvas>
          </Main>
        </Body>
        <ImportWindow><ImportHead>Variable import<X size={8} color="#888" /></ImportHead></ImportWindow>
        <OpenDialog />
        <Pointer width="7" height="11" viewBox="0 0 7 11"><path d="M1 1v8l2-2 1 3 1-0.5-1-2.5h2.5z" fill="#fff" stroke="#222" strokeWidth="0.8" /></Pointer>
      </Shell>
    </Page>
  );
}
